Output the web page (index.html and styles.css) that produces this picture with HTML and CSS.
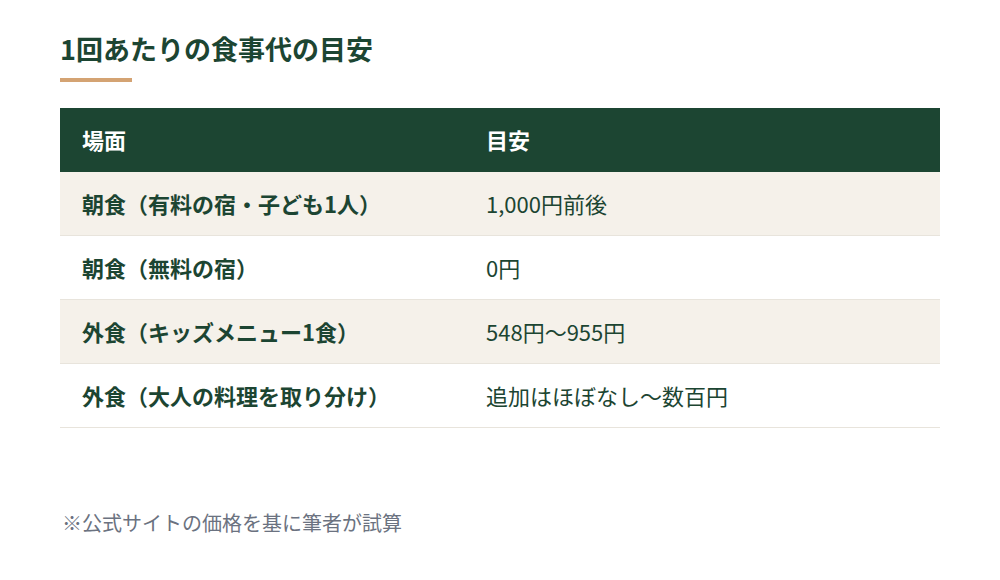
FILE: index.html
```html
<!DOCTYPE html>
<html lang="ja">
<head>
<meta charset="utf-8">
<link rel="stylesheet" href="styles.css">
</head>
<body>
<div class="page">
  <h2 class="title">1回あたりの食事代の目安</h2>
  <div class="accent"></div>
  <table class="cost">
    <thead>
      <tr><th class="c1">場面</th><th class="c2">目安</th></tr>
    </thead>
    <tbody>
      <tr class="alt"><td class="label">朝食（有料の宿・子ども1人）</td><td>1,000円前後</td></tr>
      <tr><td class="label">朝食（無料の宿）</td><td>0円</td></tr>
      <tr class="alt"><td class="label">外食（キッズメニュー1食）</td><td>548円～955円</td></tr>
      <tr><td class="label">外食（大人の料理を取り分け）</td><td>追加はほぼなし～数百円</td></tr>
    </tbody>
  </table>
  <p class="note">※公式サイトの価格を基に筆者が試算</p>
</div>
</body>
</html>
```
FILE: styles.css
```css
html, body {
  margin: 0;
  padding: 0;
  background: #ffffff;
}
body {
  font-family: "Noto Sans CJK JP", "Noto Sans", sans-serif;
  color: #1c4532;
}
.page {
  padding: 29px 60px 0 60px;
}
.title {
  margin: 0;
  font-size: 27px;
  font-weight: 700;
  line-height: 40px;
  color: #1c4532;
}
.accent {
  width: 72px;
  height: 4px;
  background: #d4a373;
  margin-top: 9px;
  margin-bottom: 26px;
}
.cost {
  width: 880px;
  border-collapse: collapse;
  font-size: 22px;
}
.cost th, .cost td {
  height: 61px;
  padding: 0 22px 2px 22px;
  text-align: left;
  vertical-align: middle;
  border-bottom: 1px solid #e8e4dc;
  line-height: 30px;
}
.cost th {
  height: 61px;
  padding-bottom: 3px;
  background: #1c4532;
  color: #ffffff;
  font-weight: 700;
  border-bottom: none;
}
.cost .c1 {
  width: 360px;
}
.cost td.label {
  font-weight: 700;
}
.cost tr.alt td {
  background: #f5f1ea;
}
.note {
  margin: 80px 0 0 2px;
  font-size: 20px;
  color: #6b7280;
}
```
